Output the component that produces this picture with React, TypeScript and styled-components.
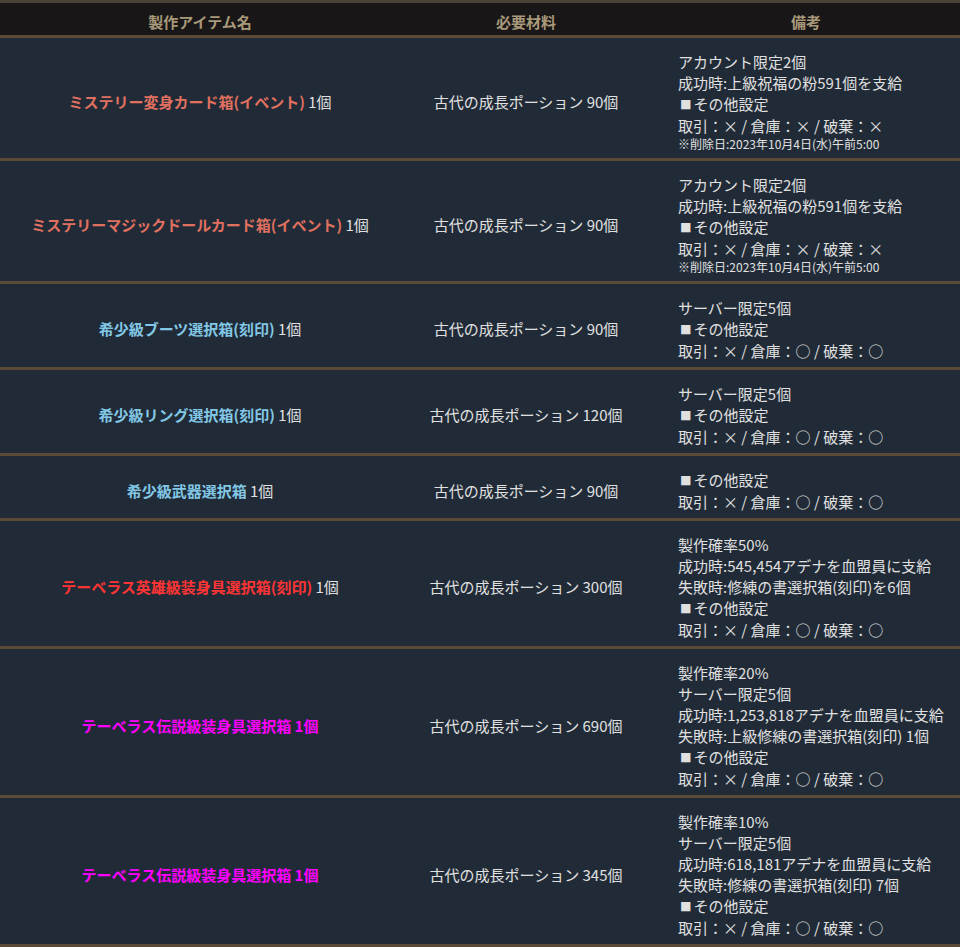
import React from "react";
import styled, {createGlobalStyle} from "styled-components";

type Tone = 'coral' | 'blue' | 'red' | 'magenta';

type Recipe = {
  name: string;
  tone: Tone;
  count: string;
  countInName?: boolean;
  material: string;
  notes: string[];
  small?: string;
};

const toneColor: Record<Tone, string> = {
  coral: '#e0705f',
  blue: '#82c8e6',
  red: '#ff3434',
  magenta: '#ff00ff',
};

const settings = (trade: string, store: string, drop: string) =>
  `取引：${trade} / 倉庫：${store} / 破棄：${drop}`;

const recipes: Recipe[] = [
  {
    name: 'ミステリー変身カード箱(イベント)', tone: 'coral', count: '1個',
    material: '古代の成長ポーション 90個',
    notes: ['アカウント限定2個', '成功時:上級祝福の粉591個を支給', '■その他設定', settings('×', '×', '×')],
    small: '※削除日:2023年10月4日(水)午前5:00',
  },
  {
    name: 'ミステリーマジックドールカード箱(イベント)', tone: 'coral', count: '1個',
    material: '古代の成長ポーション 90個',
    notes: ['アカウント限定2個', '成功時:上級祝福の粉591個を支給', '■その他設定', settings('×', '×', '×')],
    small: '※削除日:2023年10月4日(水)午前5:00',
  },
  {
    name: '希少級ブーツ選択箱(刻印)', tone: 'blue', count: '1個',
    material: '古代の成長ポーション 90個',
    notes: ['サーバー限定5個', '■その他設定', settings('×', '○', '○')],
  },
  {
    name: '希少級リング選択箱(刻印)', tone: 'blue', count: '1個',
    material: '古代の成長ポーション 120個',
    notes: ['サーバー限定5個', '■その他設定', settings('×', '○', '○')],
  },
  {
    name: '希少級武器選択箱', tone: 'blue', count: '1個',
    material: '古代の成長ポーション 90個',
    notes: ['■その他設定', settings('×', '○', '○')],
  },
  {
    name: 'テーベラス英雄級装身具選択箱(刻印)', tone: 'red', count: '1個',
    material: '古代の成長ポーション 300個',
    notes: ['製作確率50%', '成功時:545,454アデナを血盟員に支給', '失敗時:修練の書選択箱(刻印)を6個', '■その他設定', settings('×', '○', '○')],
  },
  {
    name: 'テーベラス伝説級装身具選択箱', tone: 'magenta', count: '1個', countInName: true,
    material: '古代の成長ポーション 690個',
    notes: ['製作確率20%', 'サーバー限定5個', '成功時:1,253,818アデナを血盟員に支給', '失敗時:上級修練の書選択箱(刻印) 1個', '■その他設定', settings('×', '○', '○')],
  },
  {
    name: 'テーベラス伝説級装身具選択箱', tone: 'magenta', count: '1個', countInName: true,
    material: '古代の成長ポーション 345個',
    notes: ['製作確率10%', 'サーバー限定5個', '成功時:618,181アデナを血盟員に支給', '失敗時:修練の書選択箱(刻印) 7個', '■その他設定', settings('×', '○', '○')],
  },
];

const Note: React.FC<{text: string}> = ({text}) => {
  if (text.startsWith('■')) {
    return <NoteLine><Bullet>■</Bullet>{text.slice(1)}</NoteLine>;
  }
  return <NoteLine>{text}</NoteLine>;
}

const App: React.FC = () => {
  return (
    <>
      <GlobalStyle/>
      <Table>
        <HeaderRow>
          <HeaderCell>製作アイテム名</HeaderCell>
          <HeaderCell>必要材料</HeaderCell>
          <HeaderCell>備考</HeaderCell>
        </HeaderRow>
        {recipes.map((r, i) => (
          <Row key={i}>
            <CenterCell>
              <ItemName $tone={r.tone}>{r.name}{r.countInName ? ' ' + r.count : ''}</ItemName>
              {!r.countInName && <Count> {r.count}</Count>}
            </CenterCell>
            <CenterCell>{r.material}</CenterCell>
            <NoteCell>
              {r.notes.map((n, j) => <Note key={j} text={n}/>)}
              {r.small && <SmallNote>{r.small}</SmallNote>}
            </NoteCell>
          </Row>
        ))}
      </Table>
    </>
  )
}

export default App;

const GlobalStyle = createGlobalStyle`
  body {
    margin: 0;
    background: #212b37;
    font-family: "Noto Sans CJK JP", "Noto Sans", sans-serif;
  }
`;

const Table = styled.div`
  width: 960px;
  background: #212b37;
  color: #e0e0e0;
  font-size: 15px;
  border-top: 3px solid #4a4137;
`;

const HeaderRow = styled.div`
  display: grid;
  grid-template-columns: 400px 252px 1fr;
  height: 32px;
  background: #181616;
  border-bottom: 3px solid #5b4a38;
`;

const HeaderCell = styled.div`
  display: flex;
  align-items: center;
  justify-content: center;
  padding-top: 4px;
  color: #a8997a;
  font-weight: bold;
  font-size: 15px;
`;

const Row = styled.div`
  display: grid;
  grid-template-columns: 400px 252px 1fr;
  border-bottom: 3px solid #5b4a38;
`;

const CenterCell = styled.div`
  display: flex;
  align-items: center;
  justify-content: center;
  padding-top: 6px;
  white-space: pre;
`;

const ItemName = styled.span<{$tone: Tone}>`
  color: ${p => toneColor[p.$tone]};
  font-weight: bold;
  white-space: pre;
`;

const Count = styled.span`
  white-space: pre;
`;

const NoteCell = styled.div`
  padding: 13px 0 6px 26px;
  display: flex;
  flex-direction: column;
`;

const NoteLine = styled.div`
  line-height: 21px;
  white-space: nowrap;
`;

const Bullet = styled.span`
  display: inline-block;
  font-size: 11.5px;
  margin: 0 2px 0 2px;
  vertical-align: 1px;
`;

const SmallNote = styled.div`
  font-size: 12px;
  line-height: 16px;
`;
